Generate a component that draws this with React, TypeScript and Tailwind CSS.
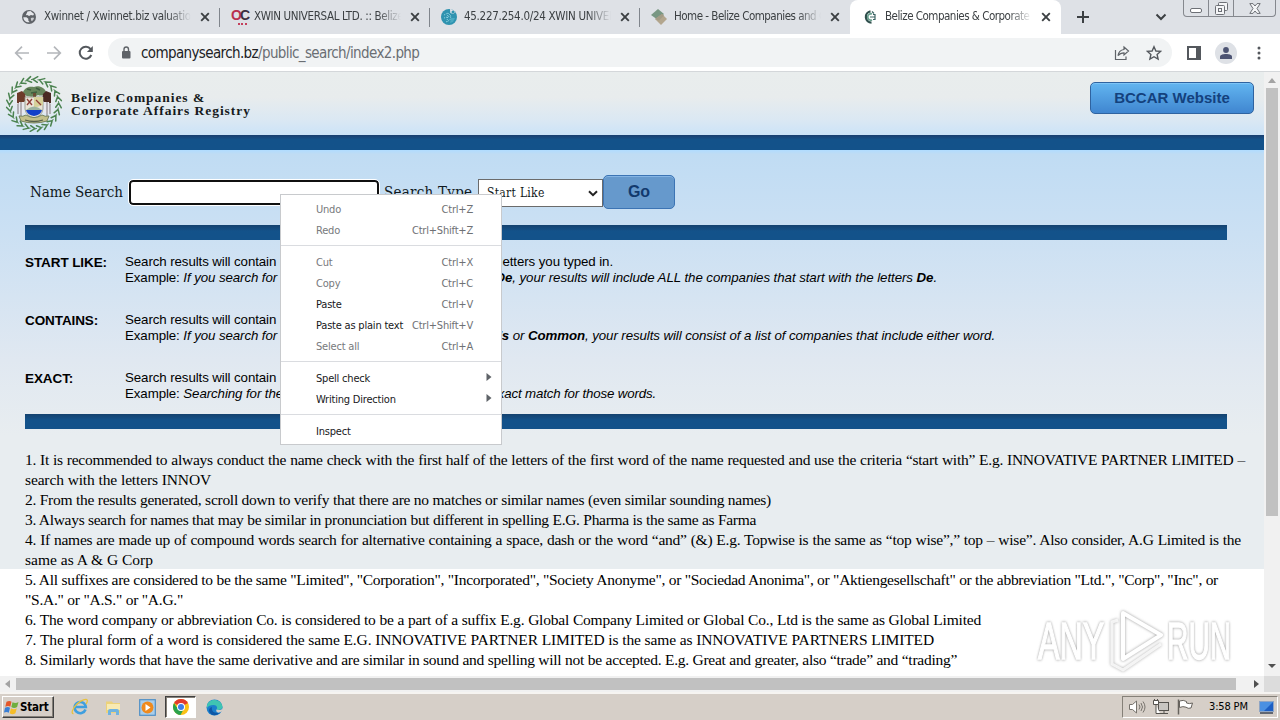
import type { ReactNode } from "react";

const UI = "font-['DejaVu_Sans_Condensed','DejaVu_Sans',sans-serif] [font-stretch:condensed]";

function GlobeIcon() {
  return (
    <svg width="16" height="16" viewBox="0 0 16 16">
      <circle cx="8" cy="8" r="7" fill="#5f6368" />
      <path d="M2.3 8.2h3.2l1.8 1.6v1.8l1.4 1.6c-3.4.5-6.2-1.6-6.4-5zM6.5 2.4l3-.3 3.6 3-1 1.3-2.2-.5-1.8 1-1.9-1-1.4.3z" fill="#e4e6ea" />
      <path d="M9.8 9l2.6-.4.6 1.2-2 2.4-1-1z" fill="#c8cbd0" />
    </svg>
  );
}

function OpenCorporatesIcon() {
  return (
    <span className="block w-4 h-4 relative font-['Liberation_Sans',sans-serif] font-bold text-[14px] leading-[13px] tracking-[-2px]">
      <span className="text-[#b8304f]">O</span>
      <span className="text-[#3d3040]">C</span>
      <span className="absolute left-[7px] bottom-0 w-[9px] border-b-2 border-dotted border-[#c4405c]" />
    </span>
  );
}

function NetIcon() {
  return (
    <svg width="16" height="16" viewBox="0 0 16 16">
      <circle cx="8" cy="8" r="8" fill="#2f93b0" />
      <path d="M9 0c2 .3 4 1.4 5.300 3l-2 2-3-1z" fill="#dfe3e9" />
      <circle cx="12" cy="3" r="1.500" fill="#2f93b0" />
      <path d="M3 6l4-2 3 3-1 4-4 2M7 4l-1 9M3 9l7-2" stroke="#8fd3e2" strokeWidth="1" strokeDasharray="1 1" fill="none" />
      <path d="M10 9l4 0-2 4-3 1z" fill="#4aaac2" />
    </svg>
  );
}

function DiamondsIcon() {
  return (
    <svg width="16" height="16" viewBox="0 0 16 16">
      <path d="M7 0l6 5-6 6-7-5z" fill="#789783" />
      <path d="M11 5l5 5-6 6-6-6z" fill="#b3a68e" />
      <path d="M11 5l2 1.500-5 5-4-1.500z" fill="#a39c86" />
    </svg>
  );
}

function RegistryIcon() {
  return (
    <svg width="16" height="16" viewBox="0 0 16 16" fill="none">
      <path d="M8.500 2.300A5.700 5.700 0 0 0 9.500 13.600" stroke="#2f4f4c" strokeWidth="2.200" />
      <path d="M10 5a3.200 3.200 0 1 0 0 6" stroke="#6aa08f" strokeWidth="1.800" />
      <path d="M8 8h4.500M10 2.500l2 2M11 5.500h2v5h-2" stroke="#3c6464" strokeWidth="1.200" />
    </svg>
  );
}

const tabs: { title: string; icon: ReactNode; text: string }[] = [
  { title: "Xwinnet / Xwinnet.biz valuation", icon: <GlobeIcon />, text: "tracking-[-0.34px]" },
  { title: "XWIN UNIVERSAL LTD. :: Belize", icon: <OpenCorporatesIcon />, text: "tracking-[-0.36px]" },
  { title: "45.227.254.0/24 XWIN UNIVERSAL", icon: <NetIcon />, text: "tracking-[-0.28px]" },
  { title: "Home - Belize Companies and Corporate", icon: <DiamondsIcon />, text: "tracking-[-0.5px]" },
  { title: "Belize Companies & Corporate Affairs", icon: <RegistryIcon />, text: "tracking-[-0.5px]" },
];

function TabStrip() {
  return (
    <div className="h-[34px] bg-[#dee1e6] flex pl-[10px] relative shrink-0">
      {tabs.map((tab, i) => (
        <div
          key={tab.title}
          className={
            i === 4
              ? "w-[211px] h-[34px] bg-white rounded-t-lg flex items-center pl-3"
              : "w-[210px] h-[34px] flex items-center pl-[11px] relative"
          }
        >
          {tab.icon}
          <span className={`ml-[7px] w-[147px] overflow-hidden whitespace-nowrap text-[11.5px] text-[#3c4043] [mask-image:linear-gradient(to_right,black_84%,transparent)] ${tab.text}`}>
            {tab.title}
          </span>
          <svg width="10" height="10" viewBox="0 0 10 10" className="ml-[9px]" stroke="#3c4043" strokeWidth="1.900">
            <path d="M1.200 1.200l7.600 7.600M8.800 1.200L1.200 8.800" />
          </svg>
          {i < 3 && <span className="absolute right-0 top-2 w-px h-[19px] bg-[#80858c]" />}
        </div>
      ))}
      <svg width="14" height="14" viewBox="0 0 14 14" className="mt-[10px] ml-[15px]" stroke="#3c4043" strokeWidth="2">
        <path d="M7 1v12M1 7h12" />
      </svg>
      <svg width="12" height="8" viewBox="0 0 12 8" className="mt-[13px] ml-[65px]" fill="none" stroke="#3c4043" strokeWidth="2">
        <path d="M1.500 1.500L6 6l4.500-4.500" />
      </svg>
      <div className="absolute left-[1183px] top-0 w-[93px] h-[17px] border border-t-0 border-[#85888e] rounded-b-[4px] flex">
        <span className="w-[25px] border-r border-[#85888e] flex justify-center pt-[8px]">
          <span className="w-3 h-[5px] border border-[#6d7076] rounded-[2px] bg-white" />
        </span>
        <span className="w-[25px] border-r border-[#85888e] flex justify-center pt-[2px]">
          <svg width="13" height="13" viewBox="0 0 13 13" fill="#f4f5f7" stroke="#6d7076">
            <rect x="3.500" y=".5" width="9" height="8" rx="1" />
            <rect x=".5" y="3.500" width="9" height="9" rx="1" />
            <rect x="3.500" y="6.500" width="3" height="3" />
          </svg>
        </span>
        <span className="flex-1 flex justify-center pt-[3px]">
          <svg width="12" height="11" viewBox="0 0 12 11" fill="#f4f5f7" stroke="#6d7076">
            <path d="M.8.600h3.200l2 2.400 2-2.400h3.200L8 5.500l3.200 4.900H8L6 8l-2 2.400H.8L4 5.500z" />
          </svg>
        </span>
      </div>
    </div>
  );
}

function Toolbar() {
  return (
    <div className="h-[38px] bg-white flex items-center border-b border-[#d4d7da] shrink-0 pl-[14px]">
      <svg width="16" height="16" viewBox="0 0 16 16" fill="none" stroke="#b4b7bb" strokeWidth="1.700">
        <path d="M15 8H2M8 1.700L1.700 8 8 14.300" />
      </svg>
      <svg width="16" height="16" viewBox="0 0 16 16" className="ml-4" fill="none" stroke="#b4b7bb" strokeWidth="1.700">
        <path d="M1 8h13M8 1.700L14.300 8 8 14.300" />
      </svg>
      <svg width="16" height="16" viewBox="0 0 16 16" className="ml-4" fill="none" stroke="#54585d" strokeWidth="2">
        <path d="M13.300 10A6 6 0 1 1 12.600 4.200" />
        <path d="M14.800 1v6H8.900z" fill="#54585d" stroke="none" />
      </svg>
      <div className="ml-[14px] w-[1064px] h-[29px] bg-[#f1f3f4] rounded-full flex items-center pl-[13px]">
        <svg width="10" height="13" viewBox="0 0 10 13">
          <rect x="1" y="5" width="8.500" height="7.500" rx="1" fill="#5f6368" />
          <path d="M3 6V3.300a2.250 2.250 0 0 1 4.500 0V6" fill="none" stroke="#5f6368" strokeWidth="1.400" />
        </svg>
        <span className="ml-[10px] pt-px text-[15px] tracking-[-0.62px] text-[#202124] whitespace-nowrap w-[971px]">
          companysearch.bz<span className="text-[#6a6e73]">/public_search/index2.php</span>
        </span>
        <svg width="16" height="16" viewBox="0 0 16 16" fill="none" stroke="#5f6368" strokeWidth="1.200" className="ml-[2px]">
          <path d="M1.500 5v9.500h10.500v-3" />
          <path d="M10 2l4.500 4-4.500 4V7.800c-3 0-4.500.9-6 2.900.5-3.500 2.500-5.800 6-6.200z" />
        </svg>
        <svg width="16" height="16" viewBox="0 0 16 16" fill="none" stroke="#54585d" strokeWidth="1.400" className="ml-[16px]">
          <path d="M8 1.700l1.900 4.300 4.700.4-3.500 3.100 1 4.600L8 11.700l-4.100 2.400 1-4.600L1.400 6.400 6.100 6z" />
        </svg>
      </div>
      <svg width="14" height="14" viewBox="0 0 14 14" className="ml-[15px]">
        <path d="M0 0h14v14H0zM2 2v10h7V2z" fill="#54585d" fillRule="evenodd" />
      </svg>
      <span className="ml-[14px] w-[22px] h-[22px] rounded-full bg-[#dee1e6] flex items-center justify-center">
        <svg width="12" height="12" viewBox="0 0 12 12" fill="#4d5473">
          <circle cx="6" cy="3" r="2.900" />
          <path d="M0 12V9.800C0 7.800 3 7 6 7s6 .8 6 2.800V12z" />
        </svg>
      </span>
      <svg width="4" height="14" viewBox="0 0 4 14" className="ml-[20px]" fill="#54585d">
        <circle cx="2" cy="2" r="1.500" />
        <circle cx="2" cy="7" r="1.500" />
        <circle cx="2" cy="12" r="1.500" />
      </svg>
    </div>
  );
}

// Ring of laurel leaves around the shield
const leaves = Array.from({ length: 24 }, (_, i) => i * 15);

function CoatOfArms() {
  return (
    <svg width="58" height="58" viewBox="0 0 58 58">
      {leaves.map((a) => (
        <g key={a} transform={`rotate(${a} 29 29)`}>
          <path d="M28 4.300l4.800-2.600M28 4.300l4.300 3" stroke="#4b8350" strokeWidth="1.500" strokeLinecap="round" />
          <path d="M28 4.300l-2 .3" stroke="#5c8f60" strokeWidth="1" />
        </g>
      ))}
      <path d="M18 17c2-5 7-6 11-5 5-2 11 1 12 5 0 4-6 4-8 3-4 3-15 2-15-3z" fill="#67865c" />
      <path d="M22 14l4 1M31 13l4 2M26 18l6-1" stroke="#3f5f3f" strokeWidth="1.500" />
      <path d="M28 18h3v5h-3z" fill="#6b4d35" />
      <path d="M12 18l5-2 3 3 1 6-4 4-5-1z" fill="#6d3b2a" />
      <path d="M46 18l-5-2-3 3-1 6 4 4 5-1z" fill="#4a2a22" />
      <path d="M14 27h5v11h-5zM39 27h5v11h-5z" fill="#e8e8ee" />
      <path d="M16 27v14M42 27v14M13 29v10M45 29v10" stroke="#83797d" strokeWidth="1" />
      <path d="M20 22h18v12q-1 7-9 9-8-2-9-9z" fill="#e9e4d8" stroke="#8e8d80" strokeWidth=".8" />
      <path d="M29 22h9v8l-9 3z" fill="#d6d19a" />
      <path d="M22 24l5 6M27 24l-5 6M31 25l5 5" stroke="#8e3c38" strokeWidth="1.300" />
      <path d="M21 35q8-7 16 0z" fill="#9bb2a0" />
      <path d="M21 35h16q-1 5-8 6-7-1-8-6z" fill="#1340c8" />
      <path d="M14 41q4 1 7-1 8 5 16 0 3 2 7 1l-2 5q-6 2-13 2t-13-2z" fill="#c3c08a" stroke="#697752" strokeWidth=".9" />
      <path d="M20 45q9 3 18 0" stroke="#56604c" strokeWidth="1.300" fill="none" />
    </svg>
  );
}

function PageHeader() {
  return (
    <>
      <div className="h-[63px] bg-[linear-gradient(#e9eded,#e8eced_40%,#dbe8f3_75%,#cce3f8)] flex items-start pl-[5px]">
        <div className="mt-[3px] w-[58px]">
          <CoatOfArms />
        </div>
        <div className="ml-2 mt-[19px] text-[13.5px] leading-[13px] font-['Liberation_Serif',serif] font-bold text-[#161a20] whitespace-nowrap">
          <p className="tracking-[0.95px]">Belize Companies &amp;</p>
          <p className="tracking-[0.95px]">Corporate Affairs Registry</p>
        </div>
        <button className="ml-auto mr-[10px] mt-[10px] w-[164px] h-8 rounded-[5px] border border-[#2f63a0] bg-linear-to-b from-[#62b5f0] to-[#4086d0] shadow-[inset_0_1px_0_#7cc4f6] text-[#14417d] font-['Liberation_Sans',sans-serif] font-bold text-[15px]">
          BCCAR Website
        </button>
      </div>
      <div className="h-[15px] bg-linear-to-b from-[#193f70] via-[#13528a] via-30% to-[#13528a]" />
    </>
  );
}

function Divider() {
  return <div className="w-[1202px] h-[15px] bg-linear-to-b from-[#14426f] via-[#13528a] via-40% to-[#13528a]" />;
}

function SearchForm() {
  return (
    <div className="flex h-[34px] pl-[5px] font-['DejaVu_Serif_Condensed','DejaVu_Serif',serif] text-[15px] text-[#101820] whitespace-nowrap">
      <label className="w-[99px] leading-[34px]">Name Search</label>
      <span className="mt-[5px] w-[250px] h-[25px] rounded-[4px] border-2 border-[#101010] bg-white outline outline-white" />
      <label className="ml-[5px] w-[94px] leading-[34px] tracking-[0.25px]">Search Type</label>
      <span className="mt-1 w-[125px] h-7 bg-white border border-[#6b6b6b] flex items-center justify-between pl-2 pr-1 text-[12px] tracking-[0.3px]">
        Start Like
        <svg width="10" height="7" viewBox="0 0 10 7" fill="none" stroke="#222" strokeWidth="2">
          <path d="M1 1.200l4 4 4-4" />
        </svg>
      </span>
      <button className="w-[72px] h-[34px] rounded-[5px] border border-[#3c74b4] bg-[#6699cc] shadow-[inset_0_1px_0_#84b4e4] font-['Liberation_Sans',sans-serif] font-bold text-[16px] text-[#123a6e]">
        Go
      </button>
    </div>
  );
}

function Criterion({ name, children }: { name: string; children: ReactNode }) {
  return (
    <div className="flex h-[58px] leading-4 text-[13.3px] tracking-[-0.09px] font-['Liberation_Sans',sans-serif] text-black whitespace-nowrap">
      <b className="w-[100px] text-[13.5px] leading-[17px]">{name}</b>
      <div>{children}</div>
    </div>
  );
}

const notes: [string, string][] = [
  ["1. It is recommended to always conduct the name check with the first half of the letters of the first word of the name requested and use the criteria “start with” E.g. INNOVATIVE PARTNER LIMITED –", "w-[1220px] tracking-[-0.25px]"],
  ["search with the letters INNOV", "w-[186px] tracking-[-0.14px]"],
  ["2. From the results generated, scroll down to verify that there are no matches or similar names (even similar sounding names)", "w-[746px] tracking-[-0.27px]"],
  ["3. Always search for names that may be similar in pronunciation but different in spelling E.G. Pharma is the same as Farma", "w-[731px] tracking-[-0.3px]"],
  ["4. If names are made up of compound words search for alternative containing a space, dash or the word “and” (&) E.g. Topwise is the same as “top wise”,” top – wise”. Also consider, A.G Limited is the", "w-[1216px] tracking-[-0.25px]"],
  ["same as A & G Corp", "w-[128px]"],
  ["5. All suffixes are considered to be the same \"Limited\", \"Corporation\", \"Incorporated\", \"Society Anonyme\", or \"Sociedad Anonima\", or \"Aktiengesellschaft\" or the abbreviation \"Ltd.\", \"Corp\", \"Inc\", or", "w-[1193px] tracking-[-0.28px]"],
  ["\"S.A.\" or \"A.S.\" or \"A.G.\"", "w-[158px] tracking-[-0.26px]"],
  ["6. The word company or abbreviation Co. is considered to be a part of a suffix E.g. Global Company Limited or Global Co., Ltd is the same as Global Limited", "w-[956px] tracking-[-0.2px]"],
  ["7. The plural form of a word is considered the same E.G. INNOVATIVE PARTNER LIMITED is the same as INNOVATIVE PARTNERS LIMITED", "w-[909px] tracking-[-0.13px]"],
  ["8. Similarly words that have the same derivative and are similar in sound and spelling will not be accepted. E.g. Great and greater, also “trade” and “trading”", "w-[932px] tracking-[-0.27px]"],
];

function PageBody() {
  return (
    <div className="h-[526px] overflow-hidden bg-white bg-[linear-gradient(#b0dcff,#c0dcf3_1%,#cbe0f3_20%,#e0e8f1_50%,#e8edf0_68%,#e8edf0)] bg-no-repeat bg-[length:100%_419px] pt-[25px] pl-[25px]">
      <SearchForm />
      <div className="h-4" />
      <Divider />
      <div className="pt-[14px] h-[174px]">
        <Criterion name="START LIKE:">
          <p className="w-[488px] flex justify-between">
            <span>Search results will contain all companies that start with</span>
            <span>letters you typed in.</span>
          </p>
          <p className="w-[812px] flex justify-between">
            <span>Example: <i>If you search for companies with the letters</i></span>
            <i className="tracking-[-0.07px]"><b>De</b>, your results will include ALL the companies that start with the letters <b>De</b>.</i>
          </p>
        </Criterion>
        <Criterion name="CONTAINS:">
          <p>Search results will contain any of the words typed</p>
          <p className="w-[870px] flex justify-between">
            <span>Example: <i>If you search for the words</i></span>
            <i><b>Bob’s</b> or <b>Common</b>, your results will consist of a list of companies that include either word.</i>
          </p>
        </Criterion>
        <Criterion name="EXACT:">
          <p>Search results will contain only the exact name</p>
          <p className="w-[531px] flex justify-between">
            <span>Example: <i>Searching for the name gives an</i></span>
            <i className="tracking-[-0.16px]">exact match for those words.</i>
          </p>
        </Criterion>
      </div>
      <Divider />
      <div className="pt-[21px] font-['Liberation_Serif',serif] text-[15.5px] leading-5 text-black whitespace-nowrap">
        {notes.map(([text, fit]) => (
          <p key={text} className={`${fit} [text-align-last:justify]`}>{text}</p>
        ))}
      </div>
    </div>
  );
}

const menu: { label: string; keys?: string; on?: boolean; sub?: boolean; line?: boolean }[] = [
  { label: "Undo", keys: "Ctrl+Z" },
  { label: "Redo", keys: "Ctrl+Shift+Z", line: true },
  { label: "Cut", keys: "Ctrl+X" },
  { label: "Copy", keys: "Ctrl+C" },
  { label: "Paste", keys: "Ctrl+V", on: true },
  { label: "Paste as plain text", keys: "Ctrl+Shift+V", on: true },
  { label: "Select all", keys: "Ctrl+A", line: true },
  { label: "Spell check", on: true, sub: true },
  { label: "Writing Direction", on: true, sub: true, line: true },
  { label: "Inspect", on: true },
];

function ContextMenu() {
  return (
    <div className="absolute left-[280px] top-[194px] w-[222px] h-[251px] bg-white border border-[#c8cacd] pt-1 text-[11px] tracking-[-0.2px] whitespace-nowrap">
      {menu.map((m) => (
        <div key={m.label}>
          <div className="h-[21px] flex items-center pl-[35px] pr-[9px]">
            <span className={m.on ? "pt-[2px] text-[#17181a]" : "pt-[2px] text-[#77797c]"}>{m.label}</span>
            {m.keys && <span className="ml-auto mr-[19px] pt-[2px] text-[#6f7174]">{m.keys}</span>}
            {m.sub && (
              <svg width="6" height="8" viewBox="0 0 6 8" className="ml-auto mb-[3px]" fill="#5f6368">
                <path d="M.5 0l5 4-5 4z" />
              </svg>
            )}
          </div>
          {m.line && <div className="mt-1 mb-[6px] h-px bg-[#dadce0]" />}
        </div>
      ))}
    </div>
  );
}

function Watermark() {
  const word = "absolute top-[11px] h-11 text-[52px] leading-[44px] font-['Liberation_Sans',sans-serif] text-white origin-left [-webkit-text-stroke:1.5px_white] [filter:drop-shadow(0_0_1.5px_rgba(100,100,100,.65))]";
  return (
    <div className="absolute left-[1036px] top-[608px] w-[200px] h-[66px]">
      <span className={`${word} left-[2px] scale-x-[0.62]`}>ANY</span>
      <svg width="62" height="66" viewBox="0 0 62 66" className="absolute left-[70px] top-0 [filter:drop-shadow(0_0_1.5px_rgba(100,100,100,.65))]" fill="none" stroke="#fff" strokeWidth="4" strokeLinejoin="round">
        <path d="M17 5l38 22-38 24z" />
        <path d="M12 12l-6 2v42l11 6 38-26" strokeOpacity=".8" strokeWidth="3" />
      </svg>
      <span className={`${word} left-[131px] scale-x-[0.57]`}>RUN</span>
    </div>
  );
}

function Taskbar() {
  return (
    <div className="h-[28px] bg-[#d6cfc8] border-t-2 border-[#f6f4f1] flex shrink-0 relative">
      <div className="mt-[2px] ml-[2px] w-[52px] h-[22px] border border-t-white border-l-white border-r-[#404040] border-b-[#404040] shadow-[inset_-1px_-1px_0_#858078] flex items-center pl-px text-[11.5px] font-bold text-black tracking-[-0.2px]">
        <svg width="15" height="15" viewBox="0 0 15 15" className="mr-[1px] shrink-0">
          <path d="M2.500 1.800q3-1.800 5 0L6.300 6.700q-2-1.500-5 0z" fill="#e4572a" />
          <path d="M8.500 2.300q3 1.600 6-.2l-1.400 5q-3 1.700-5.800 0z" fill="#6fae3e" />
          <path d="M1 7.700q3-1.600 5 0L4.800 12.800q-2-1.700-4.800-.2z" fill="#3a7fd5" />
          <path d="M7 8.300q3 1.700 5.800 0l-1.400 5q-3 1.700-5.700 0z" fill="#f5bd28" />
        </svg>
        <span className="pt-[2px]">Start</span>
      </div>
      <svg width="18" height="18" viewBox="0 0 18 18" className="mt-[4px] ml-[17px]" fill="none">
        <path d="M14.500 11.500A5.600 5.600 0 1 1 14.800 9H5" stroke="#3f9fdf" strokeWidth="2.600" />
        <path d="M2.500 15.500C0 16 1 11 5.500 6.500S16 0 16.300 2.500c.2 1-.5 2.500-1.300 3.500" stroke="#e8c23d" strokeWidth="1.300" />
      </svg>
      <svg width="17" height="17" viewBox="0 0 17 17" className="mt-[5px] ml-[16px]">
        <path d="M1 2.500h6l1 1.500h7v10H1z" fill="#ecd27a" />
        <path d="M2 5h13v6H2z" fill="#f8eab2" />
        <path d="M3 16v-4q0-2 2-2h7q2 0 2 2v4h-3v-3H6v3z" fill="#6fb3df" />
      </svg>
      <svg width="17" height="17" viewBox="0 0 17 17" className="mt-[5px] ml-[17px]">
        <rect x=".7" y=".7" width="15.600" height="15.600" fill="#a9cdea" stroke="#4f8fc6" strokeWidth="1.200" />
        <circle cx="8.500" cy="8.500" r="6" fill="#ef8a1d" />
        <path d="M6.500 5l5 3.500-5 3.500z" fill="#fff" />
      </svg>
      <div className="mt-[2px] ml-[9px] w-[31px] h-[22px] bg-white border border-t-[#404040] border-l-[#404040] border-r-white border-b-white shadow-[inset_1px_1px_0_#858078] flex items-center justify-center">
        <svg width="16" height="16" viewBox="0 0 16 16">
          <circle cx="8" cy="8" r="8" fill="#fbc116" />
          <path d="M8 8L1.070 4A8 8 0 0 1 14.930 4z" fill="#e33b2e" />
          <path d="M1.070 4A8 8 0 0 0 7.500 16l3.500-6.500L8 8H3.400z" fill="#2ba24c" />
          <circle cx="8" cy="8" r="4" fill="#fff" />
          <circle cx="8" cy="8" r="3" fill="#3f7ee8" />
        </svg>
      </div>
      <svg width="17" height="17" viewBox="0 0 17 17" className="mt-[5px] ml-[10px]">
        <circle cx="8.500" cy="8.500" r="8" fill="#1b7fcc" />
        <path d="M1 6.500C2.500-1 15-1 16.500 7.500c.3 3-3 4-6 3 1.500-2 0-4.500-3-4.500-3 0-5.500 1-6.500 3z" fill="#3fc4b2" />
        <path d="M6 8c-1 4 2 7 7.500 5.500C11 17.500 4 17 3 12c-.2-2 1-3.500 3-4z" fill="#0f57a5" />
        <path d="M10.500 10.500c2 .8 4.500.5 6-.8v2.500l-4 1.500c-2-.3-2.800-2-2-3.200z" fill="#d6cfc8" />
      </svg>
      <div className="absolute left-[1122px] top-[2px] w-[156px] h-[22px] border border-t-[#858078] border-l-[#858078] border-r-white border-b-white flex items-center">
        <svg width="17" height="14" viewBox="0 0 17 14" className="ml-[6px]" fill="#fff" stroke="#77736d" strokeWidth="1">
          <path d="M.5 4.500h3L7.500 1v12L3.500 9.500h-3z" />
          <path d="M10 4.500q2 2.500 0 5M12 3q3 4 0 8M14 1.500q4 5.500 0 11" fill="none" />
        </svg>
        <svg width="17" height="16" viewBox="0 0 17 16" className="ml-[7px]" fill="#fff" stroke="#55524e">
          <rect x="5.500" y="3.500" width="10" height="8" fill="#c9c6c2" />
          <path d="M7 14.500h8M11 12v2M.5 1.500h5v4h-5zM1.500 0v2M4.500 0v2M3 5.500v9h4" />
        </svg>
        <svg width="17" height="16" viewBox="0 0 17 16" className="ml-[7px]" fill="#fff" stroke="#66625d">
          <path d="M1.500.500v15" strokeWidth="1.500" />
          <path d="M2.500 2q4-1.500 7 .5v1.500q3 1.200 6 0l-1.500 5q-3 1-5-.8-3-1.300-6.500.3z" />
        </svg>
        <span className="ml-[15px] w-[42px] pt-px text-[11px] tracking-[-0.15px] whitespace-nowrap text-black">3:58 PM</span>
        <svg width="15" height="13" viewBox="0 0 15 13" className="ml-[8px]">
          <rect x=".5" y=".5" width="14" height="10" fill="#1d5fc4" stroke="#8fa5c4" />
          <path d="M1 1h13l-9 9H1z" fill="#4a90e2" />
          <path d="M1 12h13" stroke="#3b4454" strokeWidth="1.500" />
        </svg>
      </div>
    </div>
  );
}

export default function App() {
  return (
    <div className={`relative w-[1280px] h-[720px] overflow-hidden bg-white flex flex-col ${UI}`}>
      <TabStrip />
      <Toolbar />
      <div className="flex h-[604px] shrink-0">
        <main className="w-[1264px]">
          <PageHeader />
          <PageBody />
        </main>
        <div className="w-4 bg-[#f1f1f1] flex flex-col items-center">
          <svg width="8" height="5" viewBox="0 0 8 5" className="mt-[6px]" fill="#a3a3a3">
            <path d="M0 5l4-5 4 5z" />
          </svg>
          <div className="mt-[5px] w-3 h-[428px] bg-[#c1c1c1]" />
          <svg width="8" height="4" viewBox="0 0 8 4" className="mt-auto mb-[8px]" fill="#505050">
            <path d="M0 0l4 4 4-4z" />
          </svg>
        </div>
      </div>
      <div className="flex h-4 bg-[#f1f1f1] items-center shrink-0">
        <svg width="5" height="8" viewBox="0 0 5 8" className="ml-[5px]" fill="#a3a3a3">
          <path d="M5 0L0 4l5 4z" />
        </svg>
        <div className="ml-[6px] w-[1220px] h-3 bg-[#c1c1c1]" />
        <svg width="5" height="8" viewBox="0 0 5 8" className="ml-[18px]" fill="#505050">
          <path d="M0 0l5 4-5 4z" />
        </svg>
        <div className="ml-auto w-4 h-4 bg-[#dcdcdc]" />
      </div>
      <Taskbar />
      <ContextMenu />
      <Watermark />
    </div>
  );
}
